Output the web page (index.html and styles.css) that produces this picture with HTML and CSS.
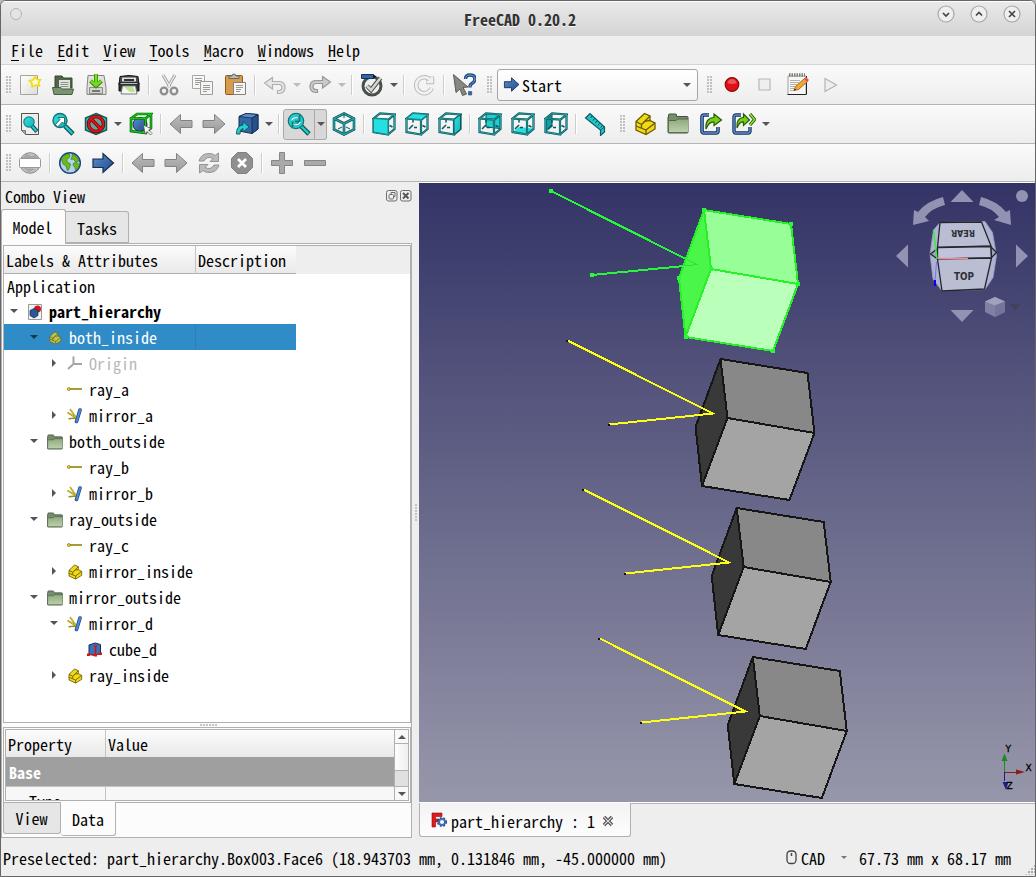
FILE: index.html
```html
<!DOCTYPE html>
<html lang="en">
<head>
<meta charset="utf-8">
<title>FreeCAD 0.20.2</title>
<link rel="stylesheet" href="styles.css">
</head>
<body>
<svg class="defs" width="0" height="0">
  <defs>
    <linearGradient id="teal" x1="0" y1="0" x2="1" y2="1"><stop offset="0" stop-color="#34e0e2"/><stop offset="1" stop-color="#0fb4b7"/></linearGradient>
    <linearGradient id="blue" x1="0" y1="0" x2="1" y2="1"><stop offset="0" stop-color="#5c8fd0"/><stop offset="1" stop-color="#204a87"/></linearGradient>
    <linearGradient id="sage" x1="0" y1="0" x2="0" y2="1"><stop offset="0" stop-color="#8fa981"/><stop offset="1" stop-color="#bcd0a8"/></linearGradient>
    <linearGradient id="paper" x1="0" y1="0" x2="1" y2="1"><stop offset="0" stop-color="#ffffff"/><stop offset="1" stop-color="#dcdcd8"/></linearGradient>
    <linearGradient id="gray" x1="0" y1="0" x2="0" y2="1"><stop offset="0" stop-color="#bdbdbd"/><stop offset="1" stop-color="#999999"/></linearGradient>
    <linearGradient id="sky" x1="0" y1="0" x2="0" y2="1"><stop offset="0" stop-color="#333366"/><stop offset="1" stop-color="#9797ab"/></linearGradient>

    <symbol id="new" viewBox="0 0 24 24"><path d="M2.500 2.500h17v19h-17z" fill="url(#paper)" stroke="#a5a59f"/><path d="M17 3.500l1.800 3 3.600.2-2 2.900.9 3.200-3.800-.6-3.300 1.600-.3-3.600-2.300-2.500 3.700-1z" fill="#fffbd0" stroke="#f2dc12" stroke-width="1.700"/></symbol>
    <symbol id="open" viewBox="0 0 24 24"><path d="M4 3h7l1.500 2H21v10H4z" fill="#4f644a" stroke="#34482f"/><path d="M8 7h11v9H8z" fill="#dfe3dc"/><path d="M9.500 9.500h8M9.500 11.500h8M9.500 13.500h8" stroke="#8f958d"/><path d="M1.500 14.500h8l2 1.500h11l-1.500 5.500H3z" fill="#7c9271" stroke="#455c3e"/></symbol>
    <symbol id="save" viewBox="0 0 24 24"><path d="M4 2.500h16l2 12v7h-19v-7z" fill="#e0e0dc" stroke="#868680"/><path d="M5.500 14.500h13v6h-13z" fill="#d5d5d0" stroke="#8b8b86"/><path d="M8 17h8v2H8z" fill="#777"/><path d="M12 1v11M6.500 8l5.500 5 5.500-5" fill="none" stroke="#3a8d06" stroke-width="4"/><path d="M12 1v11M7 8l5 4.500L17 8" fill="none" stroke="#75dd20" stroke-width="2.400"/></symbol>
    <symbol id="print" viewBox="0 0 24 24"><path d="M3 3.500q9-2 18 0l1 8H2z" fill="#4b4b4b" stroke="#161616"/><path d="M5 4.500h14v4H5z" fill="#ddd"/><path d="M7 6h10v2H7z" fill="#29343a"/><path d="M2 10h20v8H2z" fill="#2e3234" stroke="#111"/><path d="M5.500 13h13l1.500 8H4z" fill="#f4f6f2" stroke="#7b7b7b"/><path d="M7 14l6 5h5l-2-5z" fill="#b6e58d"/><path d="M3.500 10.500h17" stroke="#bbb"/></symbol>
    <symbol id="cut" viewBox="0 0 24 24"><path d="M6 2l7 12M18 2l-7 12" stroke="#a3a3a3" stroke-width="3.200"/><path d="M6 2l7 12M18 2l-7 12" stroke="#ededed" stroke-width="1.300"/><circle cx="7" cy="18" r="3.300" fill="none" stroke="#8e8e8e" stroke-width="2.300"/><circle cx="17" cy="18" r="3.300" fill="none" stroke="#8e8e8e" stroke-width="2.300"/></symbol>
    <symbol id="copy" viewBox="0 0 24 24"><path d="M2.500 2.500h12v13h-12z" fill="#f7f7f6" stroke="#a6a6a3"/><path d="M5 5.500h7M5 7.500h7M5 9.500h5M5 11.500h4" stroke="#9b9b98"/><path d="M10.500 8.500h12v13h-12z" fill="#f4f4f2" stroke="#9c9c99"/><path d="M13 12.500h7M13 14.500h7M13 16.500h7M13 18.500h4" stroke="#9b9b98"/></symbol>
    <symbol id="paste" viewBox="0 0 24 24"><rect x="2.500" y="2.500" width="17" height="19" rx="1" fill="#d99b4b" stroke="#8f5d17"/><path d="M6 5.500V3h3q0-2 2-2t2 2h3v2.500z" fill="#bcbcb6" stroke="#6a6a66"/><path d="M10.500 9.500h12v12h-12z" fill="#f6f6f4" stroke="#80807d"/><path d="M13 12.500h7M13 14.500h7M13 16.500h5M13 18.500h4" stroke="#999"/></symbol>
    <symbol id="undo" viewBox="0 0 24 24"><path d="M9.500 4.500v4h7q5.500.4 5.500 6t-5.500 6h-2v-3h2q2.500-.3 2.500-3t-2.500-3h-7v4.500L1.500 10z" fill="#e6e6e6" stroke="#b0b0b0" stroke-width="1.200"/></symbol>
    <symbol id="redo" viewBox="0 0 24 24"><path d="M14.500 3.500v4h-7q-5.500.4-5.500 6t5.500 6h2v-3h-2Q5 16 5 13.500t2.500-3h7V15L22.500 9z" fill="#cacaca" stroke="#999" stroke-width="1.200"/></symbol>
    <symbol id="check" viewBox="0 0 24 24"><circle cx="12" cy="13" r="9" fill="#eef0ee" stroke="#4a4f4d" stroke-width="3"/><path d="M1.500 1.500h12v4h-12z" fill="#3465a4" stroke="#15305c"/><path d="M13.500 1.500l3 2-3 2z" fill="#111"/><path d="M7 13l4 4 9.500-12" fill="none" stroke="#4a4f4d" stroke-width="4.500"/><path d="M7 13l4 4 9.500-12" fill="none" stroke="#d3d7cf" stroke-width="2.500"/></symbol>
    <symbol id="reload" viewBox="0 0 24 24"><path d="M19 8A8 8 0 1 0 19.700 15M20 3.500V9h-6" fill="none" stroke="#bdbdbd" stroke-width="4.500"/><path d="M19 8A8 8 0 1 0 19.700 15M20 4v5h-5.500" fill="none" stroke="#f1f1f1" stroke-width="2.500"/></symbol>
    <symbol id="whats" viewBox="0 0 24 24"><path d="M1.500 1.500L16 14l-5 .5 3.500 6.500-4 1.500L8 16l-4 3.500z" fill="#85887f" stroke="#5a5d56"/><path d="M13.500 6q0-4 4.700-4t4.700 4q0 3-3 4.500-2 1-2 4" fill="none" stroke="#204a87" stroke-width="3.400"/><path d="M13.500 6q0-4 4.700-4t4.700 4q0 3-3 4.500-2 1-2 4" fill="none" stroke="#729fcf" stroke-width="1"/><path d="M16.500 18.500h3.200v3.500h-3.200z" fill="#3465a4" stroke="#204a87" stroke-width=".6"/></symbol>
    <symbol id="go" viewBox="0 0 24 24"><path d="M2 8h10V2.500L22.500 12 12 21.500V16.500H2z" fill="url(#blue)" stroke="#132c50" stroke-width="1.200"/></symbol>
    <symbol id="rec" viewBox="0 0 24 24"><circle cx="12" cy="11.500" r="6.800" fill="#df1116" stroke="#8c0707" stroke-width="1.200"/><path d="M7.500 10q1-4 4.500-4t4.500 4q-4.500 2-9 0z" fill="#ef5558"/></symbol>
    <symbol id="stop" viewBox="0 0 24 24"><path d="M6 6h11v11H6z" fill="#efefef" stroke="#b8b8b8" stroke-width="1.200"/></symbol>
    <symbol id="note" viewBox="0 0 24 24"><path d="M2 3h18v18.500H2z" fill="#f7f7f5" stroke="#a0a09c"/><path d="M1.500 21.500h19M20.500 3v18" stroke="#222"/><path d="M3 2h16" stroke="#808079" stroke-width="3.500" stroke-dasharray="1.500 1"/><path d="M4 7.500h10M4 9.500h9M4 11.500h7M4 13.500h6M4 15.500h4M4 17.500h4" stroke="#b3b3b0"/><path d="M8 17.500l1.500-4 9-8 3 3-9 8z" fill="#f3a537" stroke="#a56b1a"/><path d="M8 17.500l.8-2 1.200 1.200z" fill="#111"/><path d="M18 6l3 3 2-2-3-3z" fill="#ee5151"/></symbol>
    <symbol id="play" viewBox="0 0 24 24"><path d="M6 5.500v13l11.500-6.500z" fill="#efefef" stroke="#b4b4b4" stroke-width="1.200"/></symbol>

    <symbol id="fitall" viewBox="0 0 24 24"><path d="M3.500 1.500h17v21h-13l-4-4z" fill="#ededeb" stroke="#50544f"/><path d="M3.500 18.500h4v4" fill="#aaa" stroke="#777"/><path d="M14 14l5 5.500" stroke="#164f52" stroke-width="4.200"/><path d="M14 14l4.500 5" stroke="#16d0d2" stroke-width="2"/><circle cx="11" cy="10" r="5.200" fill="url(#teal)" stroke="#1b8285" stroke-width="1.200"/></symbol>
    <symbol id="fitsel" viewBox="0 0 24 24"><path d="M14 14l8 8" stroke="#164f52" stroke-width="4.600"/><path d="M14 14l7.500 7.500" stroke="#16d0d2" stroke-width="2.400"/><circle cx="9" cy="8.500" r="7" fill="url(#teal)" stroke="#127376" stroke-width="1.400"/><path d="M4.500 12.500l4.500-5-2-2h6.500v6.500l-2-2-5 5z" fill="#fff" stroke="#164f52" stroke-width=".8"/></symbol>
    <symbol id="style" viewBox="0 0 24 24"><path d="M12 1.500L22.500 6v12L12 22.500 1.500 18V6z" fill="#20c5c8" stroke="#145b5e" stroke-width="1.500"/><circle cx="12" cy="12" r="7.500" fill="#6f9c9d" stroke="#6e0505" stroke-width="3.600"/><path d="M6.500 6.500l11 11" stroke="#6e0505" stroke-width="3.600"/><circle cx="12" cy="12" r="7.500" fill="none" stroke="#e01414" stroke-width="2"/><path d="M6.500 6.500l11 11" stroke="#e01414" stroke-width="2"/></symbol>
    <symbol id="bbox" viewBox="0 0 24 24"><circle cx="11" cy="12.500" r="7" fill="url(#blue)" stroke="#14305c"/><path d="M2 6.500h14.500V21L2 19zM2 6.500L8 2h14l-5.500 4.500M22 2v14l-5.500 5" fill="none" stroke="#075e07" stroke-width="2.600"/><path d="M2 6.500h14.500V21L2 19zM2 6.500L8 2h14l-5.500 4.500M22 2v14l-5.500 5" fill="none" stroke="#14c814" stroke-width="1.300"/><path d="M14.500 13l8 4-3 1 3.500 3.500-1.500 1.500-3.500-3.500-2 2.500z" fill="#fff" stroke="#555" stroke-width=".8"/></symbol>
    <symbol id="left" viewBox="0 0 24 24"><path d="M1 12L11.500 2.500V8.500H23v7H11.500v6z" fill="url(#gray)" stroke="#828282"/></symbol>
    <symbol id="right" viewBox="0 0 24 24"><path d="M23 12L12.500 2.500V8.500H1v7h11.500v6z" fill="url(#gray)" stroke="#828282"/></symbol>
    <symbol id="linkview" viewBox="0 0 24 24"><path d="M4 4.500l7-3 12 1V17l-6 4.500L4 19z" fill="#3465a4" stroke="#122a4d"/><path d="M4 4.500l13 1.500 6-3.500-12-1z" fill="#5f8ecb" stroke="#122a4d" stroke-width=".8"/><path d="M17 6v15.500L23 17V2.500z" fill="#254f8d" stroke="#122a4d" stroke-width=".8"/><path d="M1.500 22q0-8.500 6.500-9V9.500l6 5.500-6 5v-3.500q-3 .5-3 5.500z" fill="#24cfd1" stroke="#145b5e"/></symbol>
    <symbol id="zoomv" viewBox="0 0 24 24"><path d="M14 14l8 8" stroke="#164f52" stroke-width="4.600"/><path d="M14 14l7.500 7.500" stroke="#16d0d2" stroke-width="2.400"/><circle cx="9" cy="9" r="7.700" fill="#23cccf" stroke="#127376" stroke-width="1.200"/><path d="M4.500 8.500q2-4 7-2.500l1-1.500v5H8M13.500 10q-2 4-7 2.500l-1 1.500V9.500" fill="none" stroke="#12797c" stroke-width="1.800"/><path d="M4.500 8.500q2-4 7-2.500M13.500 10q-2 4-7 2.500" fill="none" stroke="#e6ffff" stroke-width="1.200"/></symbol>
    <symbol id="iso" viewBox="0 0 24 24"><path d="M12 1.500l10 5v11l-10 5-10-5v-11zM2 6.500l10 5 10-5M12 11.500v11" fill="none" stroke="#0f5558" stroke-width="2.600"/><path d="M12 1.500l10 5v11l-10 5-10-5v-11zM2 6.500l10 5 10-5M12 11.500v11" fill="none" stroke="#22bfc2" stroke-width="1"/><path d="M12 2v4M6 17l4-2M18 17l-4-2" stroke="#164f52"/></symbol>
    <symbol id="wire" viewBox="0 0 24 24"><path d="M8 8v2.500M8 13l-4 4M9 15.500h3M17.500 13.500l3 1.500" fill="none" stroke="#0f5558" stroke-width="1.500"/><path d="M1.500 6.500L8 1.500l14.500 1-6 5zM1.500 6.500V20l14.500 2.500V7.500M22.500 2.500V17L16 22.500" fill="none" stroke="#0f5558" stroke-width="2.200"/><path d="M1.500 6.500L8 1.500l14.500 1-6 5zM1.500 6.500V20l14.500 2.500V7.500M22.500 2.500V17L16 22.500" fill="none" stroke="#22b5b8" stroke-width=".8"/></symbol>
    <symbol id="front" viewBox="0 0 24 24"><use href="#wire"/><path d="M1.500 6.500l14.500 1v15L1.500 20z" fill="#25dfe2" stroke="#14888a"/></symbol>
    <symbol id="top" viewBox="0 0 24 24"><use href="#wire"/><path d="M1.500 6.500L8 1.500l14.500 1-6 5z" fill="#25dfe2" stroke="#14888a"/></symbol>
    <symbol id="side" viewBox="0 0 24 24"><use href="#wire"/><path d="M16 7.500L22.500 2.500V17L16 22.500z" fill="url(#teal)" stroke="#0f5558"/></symbol>
    <symbol id="rear" viewBox="0 0 24 24"><path d="M8 2l14 1v13.500L8 15z" fill="#22cdd0"/><path d="M8 2v13l14 1.500" fill="none" stroke="#0f5558"/><use href="#wire"/></symbol>
    <symbol id="bottom" viewBox="0 0 24 24"><path d="M2 20l6-5 14 1.500-6 6z" fill="#25dfe2"/><use href="#wire"/></symbol>
    <symbol id="leftv" viewBox="0 0 24 24"><path d="M2 6.500L8 2v13l-6 5z" fill="#0d9fa2"/><path d="M8 2v13" stroke="#0f5558"/><use href="#wire"/></symbol>
    <symbol id="ruler" viewBox="0 0 24 24"><path d="M1.500 6L6 1.500 20.500 15v5l-4 3.500V18z" fill="#1dc9cc" stroke="#13595c" stroke-width="1.200"/><path d="M16.500 18l4-3" stroke="#13595c"/><path d="M8 4L6.500 6M10.500 6.500L9 8.500M13 9l-1.500 2M15.500 11.500L14 13.500M18 14l-1.500 1.500" stroke="#0e4a4c"/></symbol>
    <symbol id="part" viewBox="0 0 24 24"><path d="M3 9.500l8.500-8L17 4v4.500l5 2.500v6L13 22.500 3 18z" fill="#f2d916" stroke="#6b5b00" stroke-width="1.300"/><path d="M3 9.500l5.500 3L17 4M8.500 12.500V16M3 14l10 4 9-7M13 18v4.500M8.500 12.500l4-3.500 4.500-.500" fill="none" stroke="#6b5b00" stroke-width="1.300"/></symbol>
    <symbol id="group" viewBox="0 0 24 24"><path d="M2.500 5V3q0-1 1-1h6q1 0 1 1v1.500h10.500q1 0 1 1V20q0 1-1 1H3q-1 0-1-1V5z" fill="#758e6b" stroke="#40533b"/><path d="M3 8.500h7l1.500-1.500H22v13H3z" fill="url(#sage)"/><path d="M3 8.500h7l1.500-1.500H22" fill="none" stroke="#53684b"/></symbol>
    <symbol id="folder" viewBox="1.400 1 21.400 21"><use href="#group" width="24" height="24"/></symbol>
    <symbol id="link" viewBox="0 0 24 24"><path d="M10 3H5Q3 3 3 5v14q0 2 2 2h12q2 0 2-2v-4" fill="none" stroke="#14305c" stroke-width="3.600"/><path d="M10 3H5Q3 3 3 5v14q0 2 2 2h12q2 0 2-2v-4" fill="none" stroke="#5c8fd0" stroke-width="1.600"/><path d="M7 17Q6 6 15 5.500V2l7.500 6-7.500 5.500v-3.500q-5-.5-8 7z" fill="#73d216" stroke="#285a08" stroke-width="1.200"/></symbol>
    <symbol id="links" viewBox="0 0 24 24"><path d="M9 3H4Q2 3 2 5v14q0 2 2 2h12q2 0 2-2v-4" fill="none" stroke="#14305c" stroke-width="3.400"/><path d="M9 3H4Q2 3 2 5v14q0 2 2 2h12q2 0 2-2v-4" fill="none" stroke="#5c8fd0" stroke-width="1.400"/><path d="M5 16Q4 6 11.500 5.500V2l6 6-6 5.500v-3.500q-4-.5-6.500 6z" fill="#73d216" stroke="#285a08" stroke-width="1.200"/><path d="M18 2l4.500 5.500L18 13" fill="none" stroke="#285a08" stroke-width="3.200"/><path d="M18 2l4.500 5.500L18 13" fill="none" stroke="#8ae234" stroke-width="1.500"/></symbol>

    <symbol id="www" viewBox="0 0 24 24"><circle cx="12" cy="12" r="10.300" fill="#c3c3c3" stroke="#8b8b8b"/><path d="M4 7l5-4 4 2 5-1 2 4zM5 17l6 4 7-3z" fill="#a5a5a5"/><rect x="1.500" y="7.500" width="21" height="9" rx="1" fill="#fff" stroke="#999"/></symbol>
    <symbol id="globe" viewBox="0 0 24 24"><circle cx="12" cy="12" r="10.300" fill="#b4d0ee" stroke="#1d4482" stroke-width="1.500"/><path d="M3.500 8l5-5 3.500.5-.5 3-3 2.500 1 2 3 2-1 4-2 3-1.500-5-3-2-1-3zM14.500 3q5 2 6.500 7l-3 1-3-3-2 .5 1-3zM15.500 12l3.500-.5 2.500 2.500q-1 4-4 5.500l-.500-3.500-2-1.500z" fill="#66bd18" stroke="#377209" stroke-width=".6"/></symbol>
    <symbol id="sync" viewBox="0 0 24 24"><path d="M2 10Q4 2.500 12 2.500q4 0 6 2L21.500 2v8.500H13l3-3q-6-3-9 2.500zM22 14q-2 7.500-10 7.500-4 0-6-2L2.500 22v-8.500H11l-3 3q6 3 9-2.500z" fill="#bababa" stroke="#949494"/></symbol>
    <symbol id="halt" viewBox="0 0 24 24"><path d="M7.500 1.500h9l6 6v9l-6 6h-9l-6-6v-9z" fill="#8f8f8f" stroke="#808080"/><path d="M8 8l8 8M16 8l-8 8" stroke="#fff" stroke-width="2.800"/></symbol>
    <symbol id="plus" viewBox="0 0 24 24"><path d="M9.500 1.500h5v8h8v5h-8v8h-5v-8h-8v-5h8z" fill="#a9a9a9" stroke="#868686"/></symbol>
    <symbol id="minus" viewBox="0 0 24 24"><path d="M1.500 9.500h21v5h-21z" fill="#a9a9a9" stroke="#868686"/></symbol>

    <symbol id="doc" viewBox="0 0 16 16"><path d="M1.500.5h13v15h-13z" fill="#f2f2f0" stroke="#999"/><circle cx="10.500" cy="5" r="3.500" fill="#d51616"/><path d="M3 6.500L7 4.500l4 2v5l-4 2.500-4-2.500z" fill="#2b5796" stroke="#132c50" stroke-width=".7"/></symbol>
    <symbol id="origin" viewBox="0 0 16 16"><path d="M6.500.5v7.500H15M6.500 8L1 13" fill="none" stroke="#a5a5a5" stroke-width="2"/></symbol>
    <symbol id="ray" viewBox="0 0 16 16"><path d="M2 7h13" stroke="#8a7c20" stroke-width="2"/><path d="M3 7h12" stroke="#c9bc48"/><circle cx="1.800" cy="7" r="1.500" fill="#e8cf28" stroke="#82731a" stroke-width=".7"/></symbol>
    <symbol id="mirror" viewBox="0 0 16 16"><path d="M3 1l6 8.500M.5 4.500l9 5.500-8 .8" fill="none" stroke="#9b8b1b" stroke-width="1.500"/><path d="M3 1l6 8.500M.5 4.500l9 5.500" stroke="#e4d11d" stroke-width=".8"/><path d="M13 2L9.500 13.500" stroke="#1f4681" stroke-width="3.600" stroke-linecap="round"/><path d="M13 2L9.500 13.500" stroke="#4c86d0" stroke-width="2.300" stroke-linecap="round"/></symbol>
    <symbol id="cube" viewBox="0 0 16 16"><path d="M2 3L8 1l5.500 1.500v9L8 13.500 2 12.500z" fill="#3c6fb3" stroke="#14305c"/><path d="M8.500 3.500v9" stroke="#c11" stroke-width="1.500"/><path d="M1 12.500h13" stroke="#c11"/><path d="M0 11.500h3V14H0zM12 10.500h3V13h-3zM7 12h3v2.500H7zM7.500 3H10v2H7.500z" fill="#d91616"/></symbol>
    <symbol id="fc" viewBox="0 0 16 16"><path d="M1 1h10v3.500H4.500V7H8v3H4.500v5H1z" fill="#e01b1b" stroke="#8e0b0b" stroke-width=".6"/><circle cx="11" cy="10" r="3" fill="none" stroke="#3b6db0" stroke-width="2"/><circle cx="11" cy="10" r="4.400" fill="none" stroke="#214a86" stroke-width="1.200" stroke-dasharray="1.800 1.800"/></symbol>
    <g id="solid"><path d="M704 210L791 224 798 284 711 269z" fill="#888"/><path d="M711 269L798 284 773 351 685.500 337z" fill="#a4a4a4"/><path d="M704 210L711 269 685.500 337 679 278z" fill="#393939"/></g>
    <path id="edges" d="M704 210L791 224 798 284 773 351 685.500 337 679 278zM704 210L711 269 798 284M711 269L685.500 337" fill="none"/>
    <g id="rays"><path d="M551 191.500L696.500 264.500 592.500 275.500" fill="none" stroke="#ffff14" stroke-width="2"/><path d="M549.500 190.500h2v2h-2zM591 274.500h2v2h-2z" fill="#111"/></g>
  </defs>
</svg>

<div class="window">
  <header class="titlebar">
    <span class="dot"></span>
    <span class="title">FreeCAD 0.20.2</span>
    <span class="wbtns">
      <svg width="18" height="18"><circle cx="9" cy="9" r="8"/><path d="M6 8l3 3 3-3"/></svg>
      <svg width="18" height="18"><circle cx="9" cy="9" r="8"/><path d="M6 10.500l3-3 3 3"/></svg>
      <svg width="18" height="18"><circle cx="9" cy="9" r="8"/><path d="M6 6l6 6M12 6l-6 6"/></svg>
    </span>
  </header>
  <nav class="menubar"><span><u>F</u>ile</span><span><u>E</u>dit</span><span><u>V</u>iew</span><span><u>T</u>ools</span><span><u>M</u>acro</span><span><u>W</u>indows</span><span><u>H</u>elp</span></nav>

  <div class="toolbar t1">
    <i class="grip"></i>
    <b class="tb"><svg><use href="#new"/></svg></b><b class="tb"><svg><use href="#open"/></svg></b><b class="tb"><svg><use href="#save"/></svg></b><b class="tb"><svg><use href="#print"/></svg></b>
    <i class="sep"></i>
    <b class="tb"><svg><use href="#cut"/></svg></b><b class="tb"><svg><use href="#copy"/></svg></b><b class="tb"><svg><use href="#paste"/></svg></b>
    <i class="sep"></i>
    <b class="tb"><svg><use href="#undo"/></svg></b><i class="dd dim"></i><b class="tb"><svg><use href="#redo"/></svg></b><i class="dd dim"></i>
    <i class="sep"></i>
    <b class="tb"><svg><use href="#check"/></svg></b><i class="dd"></i>
    <i class="sep"></i>
    <b class="tb"><svg><use href="#reload"/></svg></b>
    <i class="sep"></i>
    <b class="tb"><svg><use href="#whats"/></svg></b>
    <i class="grip mid"></i>
    <div class="combo"><svg><use href="#go"/></svg><span>Start</span><i class="dd"></i></div>
    <i class="grip aft"></i>
    <b class="tb"><svg><use href="#rec"/></svg></b><b class="tb"><svg><use href="#stop"/></svg></b><b class="tb"><svg><use href="#note"/></svg></b><b class="tb"><svg><use href="#play"/></svg></b>
  </div>

  <div class="toolbar t2">
    <i class="grip"></i>
    <b class="tb"><svg><use href="#fitall"/></svg></b><b class="tb"><svg><use href="#fitsel"/></svg></b><b class="tb"><svg><use href="#style"/></svg></b><i class="dd"></i><b class="tb"><svg><use href="#bbox"/></svg></b>
    <i class="sep"></i>
    <b class="tb"><svg><use href="#left"/></svg></b><b class="tb"><svg><use href="#right"/></svg></b><b class="tb"><svg><use href="#linkview"/></svg></b><i class="dd"></i>
    <i class="sep"></i>
    <b class="tb on"><svg><use href="#zoomv"/></svg></b><i class="dd on"></i><b class="tb"><svg><use href="#iso"/></svg></b>
    <i class="sep"></i>
    <b class="tb"><svg><use href="#front"/></svg></b><b class="tb"><svg><use href="#top"/></svg></b><b class="tb"><svg><use href="#side"/></svg></b>
    <i class="sep"></i>
    <b class="tb"><svg><use href="#rear"/></svg></b><b class="tb"><svg><use href="#bottom"/></svg></b><b class="tb"><svg><use href="#leftv"/></svg></b>
    <i class="sep"></i>
    <b class="tb"><svg><use href="#ruler"/></svg></b>
    <i class="grip mid"></i>
    <b class="tb"><svg><use href="#part"/></svg></b><b class="tb"><svg><use href="#group"/></svg></b><b class="tb"><svg><use href="#link"/></svg></b><b class="tb"><svg><use href="#links"/></svg></b><i class="dd"></i>
  </div>

  <div class="toolbar t3">
    <i class="grip"></i>
    <b class="tb"><svg><use href="#www"/></svg></b>
    <i class="sep"></i>
    <b class="tb"><svg><use href="#globe"/></svg></b><b class="tb"><svg><use href="#go"/></svg></b>
    <i class="sep"></i>
    <b class="tb"><svg><use href="#left"/></svg></b><b class="tb"><svg><use href="#right"/></svg></b><b class="tb"><svg><use href="#sync"/></svg></b><b class="tb"><svg><use href="#halt"/></svg></b>
    <i class="sep"></i>
    <b class="tb"><svg><use href="#plus"/></svg></b><b class="tb"><svg><use href="#minus"/></svg></b>
  </div>

  <main class="main">
    <aside class="dock">
      <div class="dockhead"><span>Combo View</span>
        <svg width="26" height="12" fill="none" stroke="#6d6d6d"><rect x=".5" y=".5" width="10.500" height="10.500" rx="2"/><rect x="3" y="4.500" width="4.500" height="4.500" rx="1"/><path d="M5 4.500V2.500h4v4H7.500"/><rect x="14.500" y=".5" width="10.500" height="10.500" rx="2"/><path d="M17 3l5.500 5.500M22.500 3L17 8.500" stroke="#555" stroke-width="1.800"/></svg>
      </div>
      <div class="tabs"><span class="tab cur">Model</span><span class="tab">Tasks</span></div>
      <div class="pane">
        <div class="tree">
          <div class="thead"><span class="c1">Labels &amp; Attributes</span><span class="c2">Description</span></div>
          <div class="row app"><span>Application</span></div>
          <div class="row l0"><i class="ex"></i><svg><use href="#doc"/></svg><strong>part_hierarchy</strong></div>
          <div class="row l1 sel"><i class="ex"></i><svg><use href="#part"/></svg><span>both_inside</span></div>
          <div class="row l2 off"><i class="ex shut"></i><svg><use href="#origin"/></svg><span>Origin</span></div>
          <div class="row l2"><i class="ex none"></i><svg><use href="#ray"/></svg><span>ray_a</span></div>
          <div class="row l2"><i class="ex shut"></i><svg><use href="#mirror"/></svg><span>mirror_a</span></div>
          <div class="row l1"><i class="ex"></i><svg><use href="#folder"/></svg><span>both_outside</span></div>
          <div class="row l2"><i class="ex none"></i><svg><use href="#ray"/></svg><span>ray_b</span></div>
          <div class="row l2"><i class="ex shut"></i><svg><use href="#mirror"/></svg><span>mirror_b</span></div>
          <div class="row l1"><i class="ex"></i><svg><use href="#folder"/></svg><span>ray_outside</span></div>
          <div class="row l2"><i class="ex none"></i><svg><use href="#ray"/></svg><span>ray_c</span></div>
          <div class="row l2"><i class="ex shut"></i><svg><use href="#part"/></svg><span>mirror_inside</span></div>
          <div class="row l1"><i class="ex"></i><svg><use href="#folder"/></svg><span>mirror_outside</span></div>
          <div class="row l2"><i class="ex"></i><svg><use href="#mirror"/></svg><span>mirror_d</span></div>
          <div class="row l3"><i class="ex none"></i><svg><use href="#cube"/></svg><span>cube_d</span></div>
          <div class="row l2"><i class="ex shut"></i><svg><use href="#part"/></svg><span>ray_inside</span></div>
        </div>
        <div class="splitter"></div>
        <div class="props">
          <div class="pbox">
            <div class="ptable">
              <div class="phead"><span>Property</span><span>Value</span></div>
              <div class="pgroup">Base</div>
              <div class="prow"><span>Type</span><span></span></div>
            </div>
            <div class="sbar"><i class="up"></i><i class="thumb"></i><i class="trough"></i><i class="down"></i></div>
          </div>
        </div>
        <div class="btabs"><span class="btab">View</span><span class="btab cur">Data</span></div>
      </div>
    </aside>
    <div class="gutter"><i></i></div>
    <section class="work">
      <svg class="view" width="616" height="619" viewBox="419 183 616 619">
        <rect x="419" y="183" width="616" height="620" fill="url(#sky)"/>
        <g shape-rendering="crispEdges">
          <path d="M704 210L791 224 798 284 711 269z" fill="#98ff98"/><path d="M711 269L798 284 773 351 685.500 337z" fill="#baffba"/><path d="M704 210L711 269 685.500 337 679 278z" fill="#4bf64b"/>
          <use href="#edges" stroke="#27f027" stroke-width="2"/>
          <path d="M551 191L688 260M592 275L684 266" stroke="#27f83a" stroke-width="2" fill="none"/>
          <path d="M688 260L697 264.500 684 266" stroke="#2fe02f" fill="none"/>
          <path d="M549 189h4v4h-4zM590 273h4v4h-4zM702 208h4v4h-4zM789 222h4v4h-4zM796 282h4v4h-4zM771 349h4v4h-4zM683.500 335h4v4h-4zM677 276h4v4h-4zM709 267h4v4h-4z" fill="#27f83a"/>
          <g transform="translate(16.500 149)"><use href="#solid"/><use href="#edges" stroke="#161616" stroke-width="2"/><use href="#rays"/></g>
          <g transform="translate(32.700 298)"><use href="#solid"/><use href="#edges" stroke="#161616" stroke-width="2"/><use href="#rays"/></g>
          <g transform="translate(48.800 447)"><use href="#solid"/><use href="#edges" stroke="#161616" stroke-width="2"/><use href="#rays"/></g>
        </g>
        <g fill="#9292b2">
          <path d="M950.500 202h23L962 190zM950.500 310h23L962 322zM908 244.500v23L896 256zM1016 244.500v23l12-11.500z"/>
          <circle cx="1022" cy="196" r="6"/>
          <path d="M943 197l2 8q-13 3-20 12l4 4-16 4 1-15 4 2q9-11 25-15zM981 197l-2 8q13 3 20 12l-5 3 17 5-1-15-4 2q-9-11-25-15z"/>
        </g>
        <g stroke="#25252d" stroke-width="1.300" stroke-linejoin="round">
          <path d="M940 222.500l-6.500 7.500-3.500 24 3 25 9 12 43-1.500 8-12 3.500-22-4-23-7.500-11z" fill="#aeb3cf" stroke="#9ba0bb" stroke-width=".8"/>
          <path d="M940 222.500l41.500-.500 9.500 24-53.500 1.500z" fill="#b9bed3"/>
          <path d="M937.500 247.500l53.500-1 .5 11.500-54 1z" fill="#c0c4da"/>
          <path d="M937.500 259l54-1-7 31-42.500 2z" fill="#b9bed3"/>
          <path d="M937 249l-6.500 5 7 5zM991 247l5.500 5.500-5 5z" fill="#9da2bc"/>
        </g>
        <path d="M933.500 230l3.500 29" stroke="#3bef3b" stroke-width="1.500"/><path d="M938 258.500h30" stroke="#ef8c94" stroke-width="1.500"/><path d="M936.500 262l-1.500 19" stroke="#7474ff"/><path d="M934 280h2v6h-2z" fill="#00f"/>
        <text x="954" y="280" class="face" textLength="20" lengthAdjust="spacingAndGlyphs">TOP</text>
        <text transform="translate(975 230) rotate(180)" class="face small" textLength="24" lengthAdjust="spacingAndGlyphs">REAR</text>
        <path d="M985 301.500l10-4.500 10 4.500V312l-10 5-10-5z" fill="#7f80a4"/><path d="M985 301.500l10-4.500 10 4.500-10 4z" fill="#a0a0bf"/><path d="M995 305.500V317l10-5v-10.500z" fill="#747598"/>
        <path d="M1009 304h12l-6 6.500z" fill="#42425c"/>
        <path d="M1004.500 772V757" stroke="#1c8a1c"/><path d="M1001.500 761l3-7.500 3 7.500z" fill="#1c8a1c"/><path d="M1004.500 772.500h13" stroke="#8c1c1c"/><path d="M1016 769.500l9 2.500-9 2.500z" fill="#8c1c1c"/><path d="M1004.500 772v9" stroke="#1c1c8c"/><path d="M1002.500 782h6l-2.500 8z" fill="#1c1c8c"/>
        <text x="1005.500" y="752" class="axis">Y</text><text x="1025.500" y="771" class="axis">X</text><text x="1006.500" y="789" class="axis">Z</text>
      </svg>
      <div class="mdi"><div class="mditab"><svg class="fc"><use href="#fc"/></svg><span>part_hierarchy : 1</span><svg class="cl" width="12" height="12"><path d="M2 2l8 8M10 2l-8 8" stroke="#555" stroke-width="3.600"/><path d="M2.300 2.300l7.400 7.400M9.700 2.300L2.300 9.700" stroke="#ddd" stroke-width="1.200"/></svg></div></div>
    </section>
  </main>
  <footer class="status"><span class="msg">Preselected: part_hierarchy.Box003.Face6 (18.943703 mm, 0.131846 mm, -45.000000 mm)</span>
    <svg class="mouse" width="12" height="16"><rect x="1" y="1" width="9" height="12.500" rx="3.500" fill="none" stroke="#444" stroke-width="1.300"/><path d="M5.500 3v3" stroke="#444" stroke-width="1.500"/></svg><span class="nav">CAD</span><i class="tiny"></i><span class="dims">67.73 mm x 68.17 mm</span><i class="size"></i></footer>
</div>
</body>
</html>
```
FILE: styles.css
```css
* { box-sizing: border-box; }
html, body { margin: 0; height: 100%; }
body {
  background: #b8b8b8; overflow: hidden; color: #000;
  font: 16px/24px "Noto Sans Mono CJK JP", "Noto Sans CJK JP", monospace;
  font-feature-settings: "hwid" 1; white-space: nowrap;
}
i { font-style: normal; display: block; flex: none; }
svg { display: block; flex: none; }
.defs { position: absolute; }
.window {
  width: 1036px; height: 877px; display: flex; flex-direction: column;
  background: #eee; border: 1px solid #666; border-radius: 6px 6px 0 0; overflow: hidden;
}

.titlebar {
  height: 35px; flex: none; display: flex; justify-content: space-between;
  background: linear-gradient(#e9e9e9, #d4d4d4); border-top: 1px solid #fff; padding: 3px 14px 0 9px;
}
.dot { width: 12px; height: 12px; margin-top: 3px; border: 1px solid #b5b5b5; border-radius: 50%; background: #e4e4e4; }
.title { font-weight: 700; color: #333; line-height: 28px; margin-left: 81px; text-shadow: 0 1px #f5f5f5; }
.wbtns { display: flex; gap: 15px; }
.wbtns svg { fill: #efefef; stroke: #a8a8a8; stroke-width: 1.2; }
.wbtns path { fill: none; stroke: #444; stroke-width: 1.7; }

.menubar { height: 28px; flex: none; display: flex; gap: 14.15px; padding-left: 10px; line-height: 28px; }
.menubar u { text-underline-offset: 3px; text-decoration-thickness: 1px; }

.toolbar {
  display: flex; flex: none; align-items: center; border-top: 1px solid #b4b4b4;
  background: linear-gradient(#fafafa, #ededed);
}
.t1 { height: 40px; border-top-color: #d4d4d4; }
.t2 { height: 39px; }
.t3 { height: 38px; }
.grip {
  width: 5px; height: 18px; margin: 0 2px 0 5px;
  background-image: radial-gradient(circle at 1px 1px, #c0c0c0 .8px, transparent 1px);
  background-size: 3px 3px;
}
.grip.mid { margin: 0 5px 0 7px; }
.t2 .grip.mid { margin: 0 3px 0 8px; }
.grip.aft { margin: 0 3px 0 9px; }
.tb { width: 33px; height: 31px; flex: none; display: flex; align-items: center; justify-content: center; }
.tb svg { width: 24px; height: 24px; }
.tb.on { width: 32px; background: #d8d8d8; border: 1px solid #a9a9a9; border-radius: 3px 0 0 3px; margin-left: 1px; padding-right: 1px; }
.sep { width: 7px; height: 20px; border-left: 3px solid transparent; background: linear-gradient(90deg, #cdcdcd 1px, #fff 1px, #fff 2px, transparent 2px) padding-box; }
.dd { width: 12px; height: 31px; display: flex; align-items: center; justify-content: center; color: #555; }
.dd::before { content: ""; border: 4px solid transparent; border-top-color: currentColor; border-bottom: 0; }
.dd.dim { color: #bcbcbc; }
.dd.on { background: #d8d8d8; border: 1px solid #a9a9a9; border-left: 0; border-radius: 0 3px 3px 0; }
.combo {
  width: 201px; height: 32px; display: flex; align-items: center; padding: 0 4px 0 5px;
  border: 1px solid #a5a5a5; border-radius: 3px; background: linear-gradient(#fff, #f3f3f3);
}
.combo svg { width: 17px; height: 17px; }
.combo span { flex: 1; padding-left: 2px; }

.main { flex: 1; display: flex; min-height: 0; border-top: 1px solid #b4b4b4; }
.dock { width: 411px; flex: none; display: flex; flex-direction: column; }
.dockhead { height: 27px; flex: none; display: flex; justify-content: space-between; padding: 2px 0 0 4px; }
.dockhead svg { margin-top: 6px; }
.tabs { height: 34px; flex: none; display: flex; align-items: flex-end; position: relative; z-index: 1; }
.tab {
  width: 63px; height: 32px; padding-top: 4px; text-align: center; background: #e6e6e6;
  border: 1px solid #b0b0b0; border-left: 0; border-radius: 0 3px 0 0;
}
.tab.cur { width: 65px; height: 35px; padding-top: 5px; padding-right: 2px; background: #fcfcfc; border-left: 1px solid #b0b0b0; border-bottom: 0; border-radius: 3px 3px 0 0; margin-bottom: -1px; }
.pane { flex: 1; min-height: 0; background: #fcfcfc; border: 1px solid #b0b0b0; padding: 1px; display: flex; flex-direction: column; }
.tree { width: 408px; height: 478px; flex: none; background: #fff; border: 1px solid #b0b0b0; }
.thead { height: 28px; display: flex; background: #eee; line-height: 29px; }
.thead span { background: linear-gradient(#fcfcfc, #e9e9e9); border-bottom: 1px solid #b0b0b0; padding-left: 2px; height: 28px; }
.c1 { width: 192px; border-right: 1px solid #c4c4c4; }
.c2 { width: 100px; }
.row { height: 26px; display: flex; align-items: center; width: 292px; }
.row span, .row strong { margin-top: -1px; }
.row.app { height: 24px; padding-left: 3px; }
.row svg { width: 16px; height: 16px; margin: 1px 6px 0 0; }
.ex { width: 8px; margin: 0 9px 0 0; border: 4px solid transparent; border-top-color: #555; border-bottom: 0; height: 4px; }
.ex.shut { border: 4px solid transparent; border-left-color: #555; border-right: 0; width: 4px; height: 8px; margin: 0 11px 0 2px; }
.ex.none { border-color: transparent; }
.l0 { padding-left: 6px; }
.l1 { padding-left: 26px; }
.l2 { padding-left: 46px; }
.l3 { padding-left: 66px; }
.sel { background: linear-gradient(90deg, transparent 191px, #2a7fb9 191px, #2a7fb9 192px, transparent 192px), #308cc6; color: #fff; }
.sel .ex { border-top-color: #17364d; }
.sel svg { opacity: .75; width: 14px; margin-left: 1px; margin-right: 7px; }
.off { color: #b8b8b8; }
.splitter { width: 18px; height: 4px; margin-left: 197px; background: radial-gradient(circle at 1px 2px, #c4c4c4 .8px, transparent 1px) 0 0 / 3px 4px; }
.props { width: 408px; height: 76px; flex: none; border: 1px solid #b0b0b0; padding: 1px; }
.pbox { height: 72px; border: 1px solid #b0b0b0; display: flex; overflow: hidden; background: #f7f7f7; }
.ptable { width: 388px; height: 70px; overflow: hidden; flex: none; }
.phead { height: 27px; display: flex; background: linear-gradient(#fcfcfc, #e9e9e9); line-height: 29px; }
.phead span { padding-left: 2px; }
.phead span:first-child, .prow span:first-child { width: 100px; border-right: 1px solid #c4c4c4; }
.pgroup { height: 30px; background: #9f9f9f; color: #fff; font-weight: 700; line-height: 31px; padding-left: 3px; border-bottom: 1px solid #c4c4c4; }
.prow { height: 26px; display: flex; background: #f7f7f7; line-height: 28px; }
.prow span { padding-left: 23px; }
.sbar { width: 14px; border-left: 1px solid #b0b0b0; background: #e0e0e0; display: flex; flex-direction: column; }
.up, .down { height: 14px; background: #f8f8f8; display: flex; align-items: center; justify-content: center; }
.up { border-bottom: 1px solid #b0b0b0; }
.down { border-top: 1px solid #b0b0b0; flex: 1; }
.up::before { content: ""; border: 4px solid transparent; border-bottom-color: #555; border-top: 0; }
.down::before { content: ""; border: 4px solid transparent; border-top-color: #555; border-bottom: 0; }
.thumb { height: 27px; background: linear-gradient(90deg, #fdfdfd, #efefef); border-bottom: 1px solid #b0b0b0; }
.trough { height: 15px; }
.btabs { display: flex; align-items: flex-start; }
.btab { width: 58px; height: 31px; line-height: 31px; padding-right: 1px; text-align: center; background: #e6e6e6; border: 1px solid #b0b0b0; border-top: 0; border-radius: 0 0 3px 3px; }
.btab.cur { width: 55px; height: 34px; line-height: 34px; padding: 0; margin-top: -1px; background: #fcfcfc; border-left: 0; }

.gutter { width: 7px; flex: none; padding: 322px 0 0 3px; }
.gutter i { width: 3px; height: 18px; background: radial-gradient(circle at 1px 1px, #c4c4c4 .8px, transparent 1px) 0 0 / 3px 3px; }
.work { flex: 1; min-width: 0; padding-top: 1px; background: linear-gradient(#fafafa 1px, transparent 1px); }
.face { font: 700 10px "DejaVu Sans", sans-serif; fill: #303038; }
.small { font-size: 8px; }
.axis { font: 9px "DejaVu Sans", sans-serif; fill: #000; stroke: #000; stroke-width: .3px; }
.mdi { border-top: 1px solid #fff; height: 35px; box-shadow: inset 0 1px #b4b4b4; }
.mditab { width: 212px; height: 34px; display: flex; align-items: center; padding-left: 11px; background: linear-gradient(#f3f3f3, #fdfdfd); border: 1px solid #b0b0b0; border-top: 0; border-radius: 0 0 3px 3px; }
.mditab span { padding: 2px 7px 0 4px; }
.fc { width: 16px; height: 16px; }
.cl { margin-top: 3px; }

.status { height: 38px; flex: none; display: flex; align-items: center; padding: 1px 0 0 2px; }
.msg { width: 783px; }
.mouse { margin-top: 1px; }
.nav { padding-left: 3px; width: 43px; }
.tiny { width: 6px; height: 3px; border: 3px solid transparent; border-top-color: #777; border-bottom: 0; }
.dims { margin-left: 12px; }
.size { width: 10px; height: 10px; margin: 24px 0 0 auto; background: radial-gradient(circle at 1px 1px, #aaa .8px, transparent 1px) 0 0 / 3px 3px; clip-path: polygon(100% 0, 100% 100%, 0 100%); }
```
